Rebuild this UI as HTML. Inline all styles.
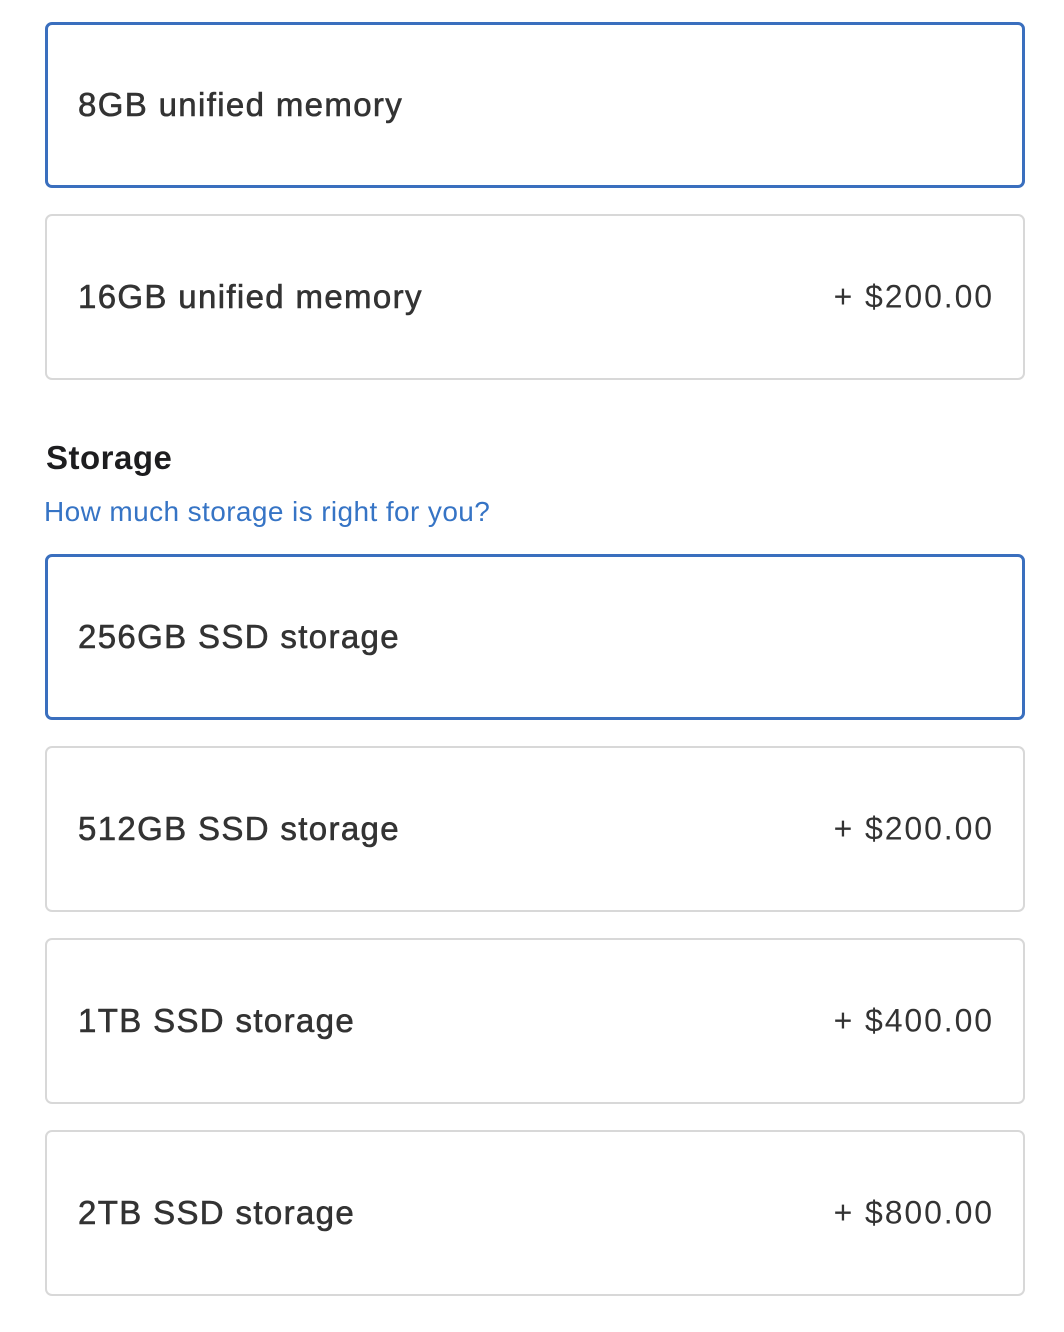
<!DOCTYPE html>
<html><head><meta charset="utf-8"><style>
html,body{margin:0;padding:0;background:#fff;width:1064px;height:1332px;overflow:hidden;font-family:"Liberation Sans",sans-serif;}
.box{position:absolute;left:45px;width:980px;height:166px;box-sizing:border-box;border:2px solid #d8d8d8;border-radius:7px;}
.box.sel{border:3px solid #3a6fbe;}
.lbl{position:absolute;left:31px;top:50%;transform:translateY(-50%);font-size:33px;letter-spacing:1.35px;color:#333;-webkit-text-stroke:0.6px #333;white-space:nowrap;}
.sel .lbl{left:30px;}
.pr{position:absolute;right:29px;top:50%;transform:translateY(-50%);font-size:32px;letter-spacing:1.9px;color:#333;white-space:nowrap;}
h2{position:absolute;left:46px;top:439px;margin:0;font-size:33px;letter-spacing:0.5px;font-weight:bold;color:#1d1d1f;}
.lnk{position:absolute;left:44px;top:496px;font-size:28px;letter-spacing:0.4px;color:#3674c5;white-space:nowrap;}
</style></head><body>
<div class="box sel" style="top:22px"><div class="lbl">8GB unified memory</div></div>
<div class="box" style="top:214px"><div class="lbl">16GB unified memory</div><div class="pr">+ $200.00</div></div>
<h2>Storage</h2>
<div class="lnk">How much storage is right for you?</div>
<div class="box sel" style="top:554px"><div class="lbl">256GB SSD storage</div></div>
<div class="box" style="top:746px"><div class="lbl">512GB SSD storage</div><div class="pr">+ $200.00</div></div>
<div class="box" style="top:938px"><div class="lbl">1TB SSD storage</div><div class="pr">+ $400.00</div></div>
<div class="box" style="top:1130px"><div class="lbl">2TB SSD storage</div><div class="pr">+ $800.00</div></div>
</body></html>
